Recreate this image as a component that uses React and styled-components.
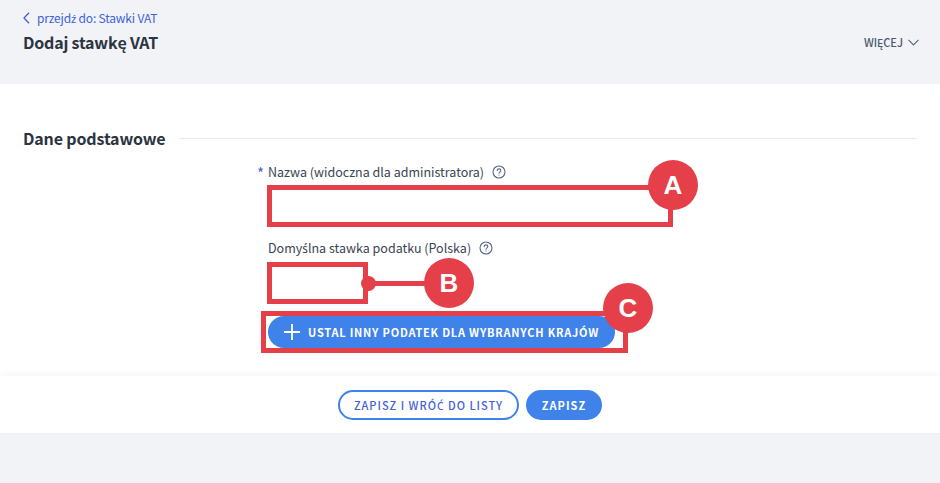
import React from 'react';
import styled, { createGlobalStyle } from 'styled-components';

const RED = '#e5404a';
const BLUE = '#3f83ea';
const LINK = '#3f62d8';
const DARK = '#2b3440';
const FONT = `"Noto Sans CJK JP", "Noto Sans", sans-serif`;

const GlobalStyle = createGlobalStyle`
  html, body {
    margin: 0;
    padding: 0;
    background: #f1f3f7;
    font-family: ${FONT};
    color: ${DARK};
  }
  * { box-sizing: border-box; }
`;

const Page = styled.div`
  width: 940px;
  height: 483px;
  overflow: hidden;
  display: flex;
  flex-direction: column;
`;

const Header = styled.header`
  height: 84px;
  padding: 9px 21px 0 23px;
  display: flex;
  justify-content: space-between;
  align-items: flex-start;
`;

const BackLink = styled.a`
  display: flex;
  align-items: center;
  gap: 7px;
  height: 18px;
  font-size: 12px;
  line-height: 18px;
  letter-spacing: -0.18px;
  color: ${LINK};
`;

const Title = styled.h1`
  margin: 3px 0 0;
  font-size: 16px;
  line-height: 24px;
  font-weight: 600;
  letter-spacing: -0.2px;
  color: ${DARK};
`;

const More = styled.div`
  margin-top: 25px;
  display: flex;
  align-items: center;
  gap: 5px;
  font-size: 11px;
  line-height: 16px;
  font-weight: 500;
  color: #4c5870;
`;

const Main = styled.main`
  height: 292px;
  background: #fff;
  padding: 43px 23px 0;
`;

const SectionHead = styled.div`
  display: flex;
  align-items: center;
  gap: 14px;
  height: 22px;
`;

const SectionTitle = styled.h2`
  margin: 0;
  font-size: 16px;
  line-height: 22px;
  font-weight: 600;
  letter-spacing: -0.15px;
  color: ${DARK};
`;

const SectionLine = styled.div`
  flex: 1;
  height: 1px;
  background: #e9eaec;
`;

const Form = styled.div`
  margin-left: 238px;
  margin-top: 14px;
  display: flex;
  flex-direction: column;
  align-items: flex-start;
`;

const Label = styled.label`
  position: relative;
  display: flex;
  align-items: center;
  gap: 8px;
  height: 18px;
  margin-left: 7px;
  margin-top: ${(p) => p.$top || 0}px;
  font-size: 12.5px;
  line-height: 18px;
  color: #3a4452;
`;

const Star = styled.span`
  position: absolute;
  left: -11px;
  top: 1px;
  font-size: 15px;
  color: ${LINK};
`;

// these acute letters are missing from the CJK font, so they come from Noto Sans
const Acute = styled.span`
  font-family: "Noto Sans", sans-serif;
  font-size: 0.94em;
`;

const Field = styled.div`
  position: relative;
  margin-left: 6px;
  margin-top: ${(p) => p.$top}px;
  width: ${(p) => p.$width}px;
  height: 42px;
  border: 5px solid ${RED};
  background: #fff;
`;

const Badge = styled.span`
  position: absolute;
  top: ${(p) => p.$top}px;
  left: ${(p) => p.$left}px;
  width: 50px;
  height: 50px;
  border-radius: 50%;
  background: ${RED};
  color: #fff;
  font-family: "Liberation Sans", Arial, sans-serif;
  font-size: 26px;
  font-weight: 700;
  display: flex;
  align-items: center;
  justify-content: center;
  z-index: 2;
`;

const Dot = styled.span`
  position: absolute;
  left: 89px;
  top: 9px;
  width: 15px;
  height: 15px;
  border-radius: 50%;
  background: ${RED};
`;

const Connector = styled.span`
  position: absolute;
  left: 100px;
  top: 14px;
  width: 60px;
  height: 5px;
  background: ${RED};
`;

const ButtonFrame = styled.div`
  position: relative;
  margin-top: 7px;
  width: 367px;
  height: 42px;
  border: 5px solid ${RED};
  background: #fff;
  display: flex;
  align-items: center;
`;

const AddButton = styled.button`
  width: 347px;
  height: 32px;
  margin-left: 2px;
  border: 0;
  border-radius: 16px;
  background: ${BLUE};
  color: #fff;
  padding: 0 0 0 16px;
  display: flex;
  align-items: center;
  gap: 8px;
  font-family: ${FONT};
  font-size: 11px;
  font-weight: 700;
  letter-spacing: 0.78px;
  white-space: nowrap;

  svg {
    flex-shrink: 0;
  }
`;

const Footer = styled.footer`
  height: 58px;
  background: #fff;
  box-shadow: 0 -3px 5px rgba(40, 50, 70, 0.035);
  border-bottom: 1px solid #eef0f3;
  display: flex;
  align-items: center;
  justify-content: center;
  gap: 7px;
  position: relative;
`;

const PillButton = styled.button`
  height: 30px;
  width: ${(p) => p.$width}px;
  border-radius: 15px;
  border: 2px solid ${BLUE};
  background: ${(p) => (p.$solid ? BLUE : '#fff')};
  color: ${(p) => (p.$solid ? '#fff' : LINK)};
  font-family: ${FONT};
  font-size: 11px;
  font-weight: ${(p) => (p.$solid ? 700 : 500)};
  letter-spacing: 1px;
  padding: 0;
  white-space: nowrap;
`;

const HelpIcon = () => (
  <svg width="14" height="14" viewBox="0 0 14 14" fill="none" stroke="#5a6685" strokeWidth="1.1">
    <circle cx="7" cy="7" r="6" />
    <path d="M5.2 5.6c0-1 .8-1.7 1.8-1.7s1.8.7 1.8 1.6c0 1.3-1.8 1.4-1.8 2.8" strokeLinecap="round" />
    <circle cx="7" cy="10" r=".55" fill="#5a6685" stroke="none" />
  </svg>
);

const App = () => {
  return (
    <Page>
      <GlobalStyle />
      <Header>
        <div>
          <BackLink>
            <svg width="7" height="12" viewBox="0 0 7 12" fill="none" stroke={LINK} strokeWidth="1.3">
              <path d="M6 .8 1 6l5 5.2" />
            </svg>
            <span>przejd<Acute>ź</Acute> do: Stawki VAT</span>
          </BackLink>
          <Title>Dodaj stawkę VAT</Title>
        </div>
        <More>
          WIĘCEJ
          <svg width="11" height="7" viewBox="0 0 11 7" fill="none" stroke="#5b6680" strokeWidth="1.1">
            <path d="M.5.8 5.5 6l5-5.2" />
          </svg>
        </More>
      </Header>
      <Main>
        <SectionHead>
          <SectionTitle>Dane podstawowe</SectionTitle>
          <SectionLine />
        </SectionHead>
        <Form>
          <Label>
            <Star>*</Star>
            Nazwa (widoczna dla administratora)
            <HelpIcon />
          </Label>
          <Field $top={4} $width={406}>
            <Badge $top={-30} $left={376}>A</Badge>
          </Field>
          <Label $top={12}>
            <span>Domy<Acute>ś</Acute>lna stawka podatku (Polska)</span>
            <HelpIcon />
          </Label>
          <Field $top={5} $width={101}>
            <Dot />
            <Connector />
            <Badge $top={-9} $left={152}>B</Badge>
          </Field>
          <ButtonFrame>
            <AddButton>
              <svg width="16" height="16" viewBox="0 0 16 16" stroke="#fff" strokeWidth="1.8">
                <path d="M8 0v16M0 8h16" />
              </svg>
              USTAL INNY PODATEK DLA WYBRANYCH KRAJÓW
            </AddButton>
            <Badge $top={-33} $left={337}>C</Badge>
          </ButtonFrame>
        </Form>
      </Main>
      <Footer>
        <PillButton $width={181}>ZAPISZ I WRÓ<Acute>Ć</Acute> DO LISTY</PillButton>
        <PillButton $solid $width={76}>ZAPISZ</PillButton>
      </Footer>
    </Page>
  );
};

export default App;
